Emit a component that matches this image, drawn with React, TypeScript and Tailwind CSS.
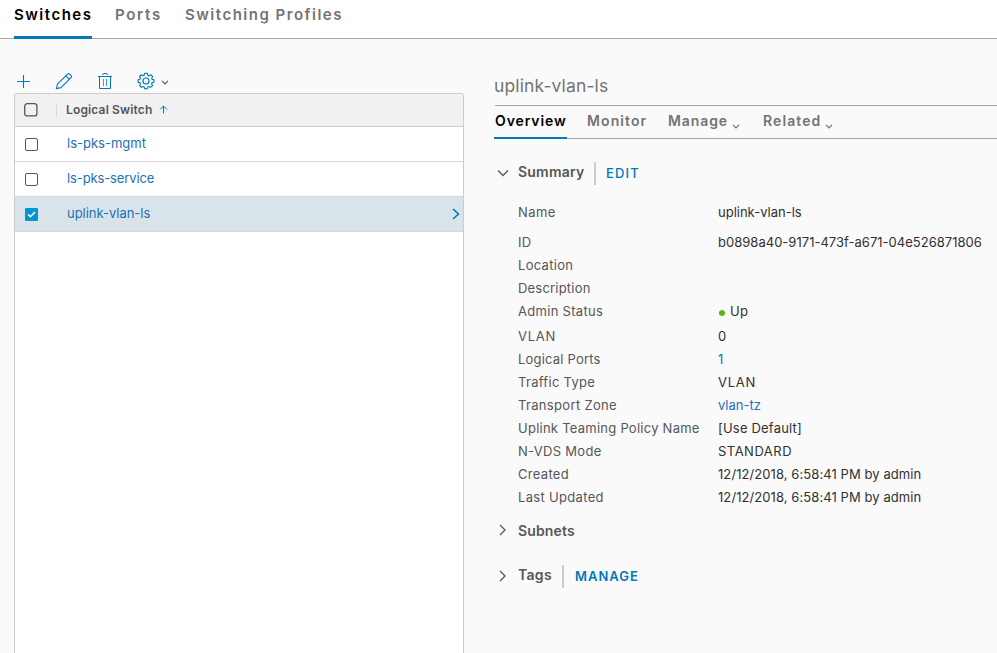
import type { ReactNode } from "react";

type Field = { label: string; labelClass: string; value?: ReactNode; rowClass?: string };

function Caret({ className }: { className: string }) {
  return (
    <svg viewBox="0 0 8 5" className={className} fill="none" stroke="currentColor" strokeWidth="1.2">
      <path d="M1 0.8 L4 3.8 L7 0.8" />
    </svg>
  );
}

function Chevron({ open }: { open?: boolean }) {
  return (
    <svg viewBox="0 0 12 12" className="-mt-px h-3 w-3 shrink-0 text-[#565656]" fill="none" stroke="currentColor" strokeWidth="1.3">
      {open ? <path d="M1 3.5 L6 8.5 L11 3.5" /> : <path d="M3 1 L8 6 L3 11" />}
    </svg>
  );
}

function Toolbar() {
  return (
    <div className="flex h-[24px] items-center pl-[2px] text-[#0079b8]">
      <svg viewBox="0 0 14 14" className="h-[14px] w-[14px]" fill="none" stroke="currentColor" strokeWidth="1.1">
        <path d="M7.5 1 V14 M1 7.5 H14" />
      </svg>
      <svg viewBox="0 0 18 18" className="ml-[25px] h-[18px] w-[18px]" fill="none" stroke="currentColor" strokeWidth="1.1" strokeLinejoin="round">
        <path d="M1.3 16.6 L2.5 12.2 L12.8 1.9 Q13.6 1.2 14.4 1.9 L16.3 3.8 Q17 4.6 16.3 5.4 L6 15.6 Z" />
        <path d="M10.9 3.9 L14.4 7.4" />
      </svg>
      <svg viewBox="0 0 16 18" className="ml-[24px] h-[18px] w-[16px]" fill="none" stroke="currentColor" strokeWidth="1">
        <path d="M1 4.5 H15 M2.5 4.5 V16.5 H13.5 V4.5 M5.5 3 Q5.5 1.5 7 1.5 H9 Q10.5 1.5 10.5 3" />
        <path d="M6.5 7 V14 M9.5 7 V14" opacity="0.75" />
      </svg>
      <svg viewBox="0 0 18 18" className="ml-[24px] h-[18px] w-[18px]" fill="none" stroke="currentColor" strokeWidth="1.1" strokeLinejoin="round">
        <path d="M7.6 1.3 H10.4 L10.9 3.3 L12.2 3.9 L14 2.8 L15.7 4.7 L14.7 6.3 L15.1 7.4 L17 7.9 V10.3 L15.1 10.8 L14.6 12 L15.6 13.6 L13.7 15.4 L12.1 14.4 L10.9 14.9 L10.4 16.8 H7.7 L7.2 14.9 L6 14.4 L4.4 15.4 L2.6 13.6 L3.6 12 L3 10.8 L1.1 10.3 V7.8 L3 7.3 L3.5 6.1 L2.5 4.5 L4.4 2.7 L6 3.8 L7.1 3.3 Z" />
        <circle cx="9" cy="9" r="3" />
      </svg>
      <Caret className="mt-[2px] ml-[6px] h-[5px] w-[8px] text-[#565656]" />
    </div>
  );
}

function Box({ checked, large }: { checked?: boolean; large?: boolean }) {
  if (checked) {
    return (
      <span className="flex h-[13px] w-[13px] items-center justify-center rounded-[1px] bg-[#0095d3]">
        <svg viewBox="0 0 9 7" className="h-[7px] w-[9px]" fill="none" stroke="white" strokeWidth="1.6">
          <path d="M1 3.4 L3.4 5.7 L8 1" />
        </svg>
      </span>
    );
  }
  return large ? (
    <svg viewBox="0 0 14 14" className="-mt-px -ml-px h-[14px] w-[14px] text-[#565656]" fill="none" stroke="currentColor" strokeWidth="1.3">
      <rect x="0.7" y="0.7" width="12.2" height="12.2" rx="2.5" />
    </svg>
  ) : (
    <span className="block h-[13px] w-[13px] rounded-[2px] border border-[#565656] bg-white" />
  );
}

function SwitchTable() {
  const rows = [
    { name: "ls-pks-mgmt", track: "tracking-normal", selected: false },
    { name: "ls-pks-service", track: "tracking-[-0.12px]", selected: false },
    { name: "uplink-vlan-ls", track: "tracking-[-0.03px]", selected: true },
  ];
  return (
    <div className="flex flex-1 flex-col overflow-hidden rounded-t-[3px] border border-b-0 border-[#ccc] bg-white">
      <div className="flex h-[33px] items-center border-b border-[#ccc] bg-[#f1f1f1] pl-[10px]">
        <Box large />
        <span className="ml-[18px] h-[14px] w-px bg-[#d7d7d7]" />
        <span className="ml-[9px] text-[12px] font-semibold tracking-[0.15px] text-[#565656]">Logical Switch</span>
        <svg viewBox="0 0 9 9" className="-mt-px ml-[7px] h-[9px] w-[9px] text-[#0079b8]" fill="none" stroke="currentColor">
          <path d="M4.5 8.5 V1 M1 4.5 L4.5 1 L8 4.5" />
        </svg>
      </div>
      {rows.map((r) => (
        <div
          key={r.name}
          className={
            r.selected
              ? "flex h-[35px] items-center border-b border-[#d7d7d7] bg-[#d9e4ea] pr-[3px] pl-[10px]"
              : "flex h-[35px] items-center border-b border-[#d7d7d7] pl-[10px]"
          }
        >
          <Box checked={r.selected} />
          <span className={`ml-[29px] text-[13px] text-[#2470b3] ${r.track}`}>{r.name}</span>
          {r.selected && (
            <svg viewBox="0 0 8 12" className="-mt-px ml-auto h-[12px] w-[8px] text-[#0079b8]" fill="none" stroke="currentColor" strokeWidth="1.6">
              <path d="M1 1 L6.5 6 L1 11" />
            </svg>
          )}
        </div>
      ))}
    </div>
  );
}

const fields: Field[] = [
  { label: "Name", labelClass: "tracking-[0.4px]", value: "uplink-vlan-ls", rowClass: "h-[30px]" },
  { label: "ID", labelClass: "tracking-[0.3px]", value: <span className="tracking-[0.02px]">b0898a40-9171-473f-a671-04e526871806</span> },
  { label: "Location", labelClass: "tracking-[0.3px]" },
  { label: "Description", labelClass: "tracking-[0.2px]" },
  {
    label: "Admin Status",
    labelClass: "tracking-[0.3px]",
    rowClass: "h-[25px]",
    value: (
      <span className="flex items-center">
        <span className="mt-[2px] ml-px h-[6px] w-[6px] rounded-full bg-[#5eb715]" />
        <span className="ml-[5px] tracking-[0.3px]">Up</span>
      </span>
    ),
  },
  { label: "VLAN", labelClass: "tracking-[0.7px]", value: "0" },
  { label: "Logical Ports", labelClass: "tracking-[0.2px]", value: <span className="text-[#0079b8]">1</span> },
  { label: "Traffic Type", labelClass: "tracking-[0.3px]", value: <span className="tracking-[0.7px]">VLAN</span> },
  { label: "Transport Zone", labelClass: "tracking-[0.33px]", value: <span className="text-[#2470b3]">vlan-tz</span> },
  { label: "Uplink Teaming Policy Name", labelClass: "tracking-[0.25px]", value: <span className="tracking-[0.2px]">[Use Default]</span> },
  { label: "N-VDS Mode", labelClass: "tracking-[0.3px]", value: <span className="tracking-[0.5px]">STANDARD</span> },
  { label: "Created", labelClass: "tracking-[0.3px]", value: <span className="tracking-[0.08px]">12/12/2018, 6:58:41 PM by admin</span> },
  { label: "Last Updated", labelClass: "tracking-[0.32px]", value: <span className="tracking-[0.08px]">12/12/2018, 6:58:41 PM by admin</span> },
];

function Details() {
  return (
    <section className="ml-[30px] min-w-0 flex-1 pt-[33px]">
      <h1 className="ml-px flex h-[34px] items-center border-b border-[#a6a6a6] text-[17.5px] tracking-[0.12px] text-[#737373]">
        <span className="-mt-[5px] -ml-px">uplink-vlan-ls</span>
      </h1>
      <nav className="flex h-[33px] border-b border-[#a6a6a6] text-[14px] leading-[29px] font-semibold text-[#737373]">
        <span className="-mb-px h-[33px] w-[73px] border-b-2 border-[#0079b8] pl-px tracking-[0.9px] text-black">Overview</span>
        <span className="ml-[20px] w-[61px] tracking-[1.1px]">Monitor</span>
        <span className="ml-[20px] flex">
          <span className="tracking-[0.9px]">Manage</span>
          <Caret className="mt-[18px] ml-[4px] h-[5px] w-[8px]" />
        </span>
        <span className="ml-[23px] flex">
          <span className="tracking-[1.1px]">Related</span>
          <Caret className="mt-[18px] ml-[4px] h-[5px] w-[8px]" />
        </span>
      </nav>
      <div className="mt-[23px] flex h-[23px] items-center pl-[3px]">
        <Chevron open />
        <span className="-mt-[4px] ml-[9px] w-[76px] text-[14px] font-semibold tracking-[0.2px] text-[#565656]">Summary</span>
        <span className="h-[23px] w-[2px] bg-[#ccc]" />
        <span className="mt-px ml-[10px] text-[13px] font-medium tracking-[1.2px] text-[#0079b8]">EDIT</span>
      </div>
      <div className="mt-[16px] pl-[24px] text-[13px] leading-[23px] text-[#565656]">
        {fields.map((f) => (
          <div key={f.label} className={`flex whitespace-nowrap ${f.rowClass ?? "h-[23px]"}`}>
            <span className={`w-[200px] shrink-0 ${f.labelClass}`}>{f.label}</span>
            <span className="text-[#313131]">{f.value}</span>
          </div>
        ))}
      </div>
      <div className="mt-[10px] flex h-[23px] items-center pl-[3px]">
        <Chevron />
        <span className="ml-[9px] text-[14px] font-semibold tracking-[0.15px] text-[#565656]">Subnets</span>
      </div>
      <div className="mt-[23px] flex h-[23px] items-center pl-[3px]">
        <Chevron />
        <span className="-mt-[4px] ml-[9px] w-[44px] text-[14px] font-semibold tracking-[0.3px] text-[#565656]">Tags</span>
        <span className="h-[23px] w-[2px] bg-[#ccc]" />
        <span className="ml-[11px] text-[13px] font-semibold tracking-[1px] text-[#0079b8]">MANAGE</span>
      </div>
    </section>
  );
}

export default function App() {
  return (
    <div className="flex h-screen flex-col overflow-hidden bg-[#fafafa] font-['Inter',sans-serif]">
      <header className="flex h-[39px] shrink-0 border-b border-[#a6a6a6] bg-white pl-[14px] text-[15px] leading-[29px] font-semibold text-[#737373]">
        <span className="-mb-px h-[39px] w-[78px] border-b-[3px] border-[#0079b8] tracking-[1.5px] text-black">Switches</span>
        <span className="ml-[23px] w-[47px] tracking-[1.7px]">Ports</span>
        <span className="ml-[23px] tracking-[1.5px]">Switching Profiles</span>
      </header>
      <main className="flex min-h-0 flex-1">
        <section className="ml-[14px] flex w-[450px] shrink-0 flex-col pt-[30px]">
          <Toolbar />
          <SwitchTable />
        </section>
        <Details />
      </main>
    </div>
  );
}
